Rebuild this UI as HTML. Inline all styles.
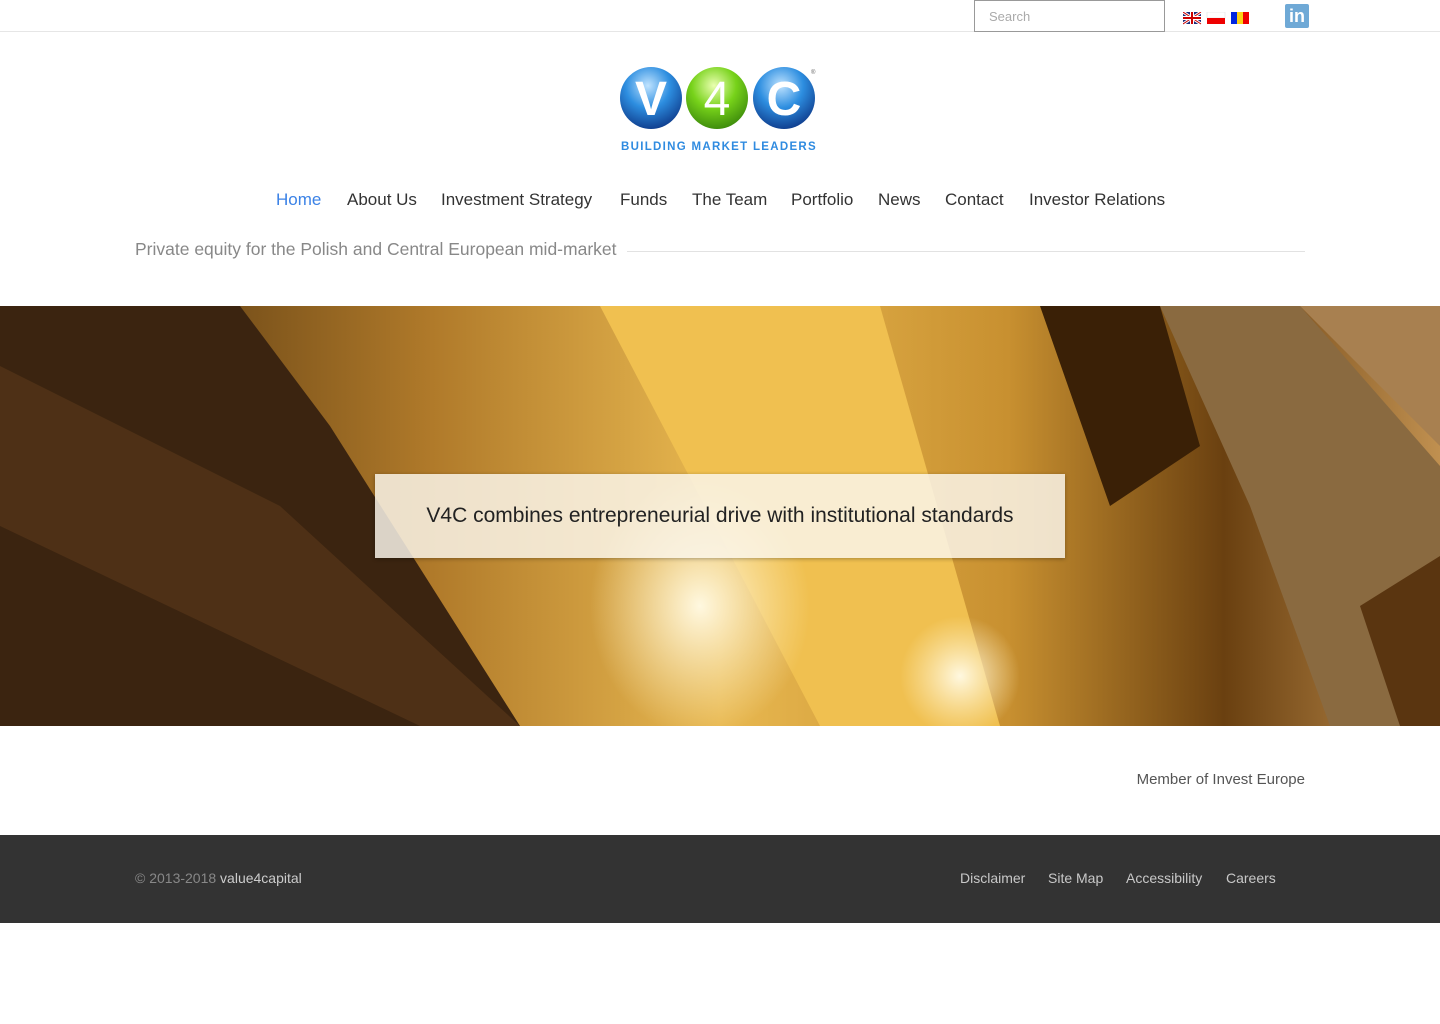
<!DOCTYPE html>
<html><head><meta charset="utf-8">
<style>
*{margin:0;padding:0;box-sizing:border-box}
body{width:1440px;height:1024px;background:#fff;font-family:"Liberation Sans",sans-serif;position:relative;overflow:hidden}
.a{position:absolute;white-space:nowrap}
.nav{top:190px;font-size:17px;color:#333}
.ft{top:870px;font-size:14px;color:#c8c8c8}
</style></head><body>
<div class="a" style="left:0;top:31px;width:1440px;height:1px;background:#e6e6e6"></div>
<div class="a" style="left:974px;top:0;width:191px;height:32px;border:1px solid #999;font-size:13px;color:#aaa;padding:8px 14px">Search</div>
<svg class="a" style="left:1183px;top:12px" width="70" height="13">
<rect x="0" y="0" width="18" height="12" fill="#1a2a7a"/><path d="M0 0L18 12M18 0L0 12" stroke="#fff" stroke-width="3"/><path d="M0 0L18 12M18 0L0 12" stroke="#c00" stroke-width="1"/><path d="M9 0V12M0 6H18" stroke="#fff" stroke-width="4"/><path d="M9 0V12M0 6H18" stroke="#c00" stroke-width="2"/>
<rect x="24" y="0" width="18" height="6" fill="#fff" stroke="#ddd" stroke-width=".5"/><rect x="24" y="6" width="18" height="6" fill="#e00"/>
<rect x="48" y="0" width="6" height="12" fill="#0026e0"/><rect x="54" y="0" width="6" height="12" fill="#fcd116"/><rect x="60" y="0" width="6" height="12" fill="#e00"/>
</svg>
<div class="a" style="left:1285px;top:4px;width:24px;height:24px;background:#6fa9d6;border-radius:2px;color:#fff;font-weight:bold;font-size:18px;line-height:24px;text-align:center">in</div>
<svg class="a" style="left:615px;top:62px" width="205" height="95">
<defs>
<radialGradient id="b" cx=".45" cy=".3" r=".8"><stop offset="0" stop-color="#bfe3ff"/><stop offset=".45" stop-color="#2d8ee0"/><stop offset="1" stop-color="#082a7a"/></radialGradient>
<radialGradient id="g" cx=".45" cy=".3" r=".8"><stop offset="0" stop-color="#eaffb0"/><stop offset=".45" stop-color="#77d21a"/><stop offset="1" stop-color="#2f7a08"/></radialGradient>
</defs>
<circle cx="36" cy="36" r="31" fill="url(#b)"/><circle cx="102" cy="36" r="31" fill="url(#g)"/><circle cx="169" cy="36" r="31" fill="url(#b)"/>
<text x="36" y="53" font-family="Liberation Sans" font-weight="bold" font-size="48" fill="#fff" text-anchor="middle">V</text>
<text x="102" y="53" font-family="Liberation Sans" font-size="48" fill="#fff" text-anchor="middle">4</text>
<text x="169" y="53" font-family="Liberation Sans" font-weight="bold" font-size="48" fill="#fff" text-anchor="middle">C</text>
<text x="196" y="12" font-size="6" fill="#666">®</text>
<text x="6" y="88" font-family="Liberation Sans" font-weight="bold" font-size="11.5" fill="#2f8be0" letter-spacing="1.3">BUILDING  MARKET  LEADERS</text>
</svg>
<div class="a nav" style="left:276px;color:#3b82e6">Home</div>
<div class="a nav" style="left:347px">About Us</div>
<div class="a nav" style="left:441px">Investment Strategy</div>
<div class="a nav" style="left:620px">Funds</div>
<div class="a nav" style="left:692px">The Team</div>
<div class="a nav" style="left:791px">Portfolio</div>
<div class="a nav" style="left:878px">News</div>
<div class="a nav" style="left:945px">Contact</div>
<div class="a nav" style="left:1029px">Investor Relations</div>
<div class="a" style="left:135px;top:239px;font-size:17.5px;color:#888">Private equity for the Polish and Central European mid-market</div>
<div class="a" style="left:627px;top:251px;width:678px;height:1px;background:#e2e2e2"></div>
<svg class="a" style="left:0;top:306px" width="1440" height="420">
<defs>
<linearGradient id="h" x1="0" x2="1"><stop offset="0" stop-color="#3a2208"/><stop offset=".3" stop-color="#b07a2a"/><stop offset=".5" stop-color="#e8b850"/><stop offset=".7" stop-color="#c89030"/><stop offset=".85" stop-color="#6a4010"/><stop offset="1" stop-color="#c09050"/></linearGradient>
<radialGradient id="w" cx=".5" cy=".5" r=".5"><stop offset="0" stop-color="#fff8e0"/><stop offset="1" stop-color="#fff0c0" stop-opacity="0"/></radialGradient>
</defs>
<rect width="1440" height="420" fill="url(#h)"/>
<polygon points="600,0 880,0 1000,420 820,420" fill="#f0c050"/>
<ellipse cx="700" cy="300" rx="110" ry="130" fill="url(#w)"/>
<ellipse cx="960" cy="370" rx="60" ry="60" fill="url(#w)"/>
<polygon points="0,0 240,0 330,120 520,420 0,420" fill="#3b2410"/>
<polygon points="0,60 280,200 520,420 420,420 0,220" fill="#4e3016"/>
<polygon points="1040,0 1160,0 1200,140 1110,200" fill="#3a2006"/>
<polygon points="1160,0 1300,0 1440,160 1440,420 1330,420 1250,200" fill="#8a6a40"/>
<polygon points="1300,0 1440,0 1440,140" fill="#a88050"/>
<polygon points="1360,300 1440,250 1440,420 1400,420" fill="#5a3510"/>
</svg>
<div class="a" style="left:375px;top:474px;width:690px;height:84px;background:rgba(250,245,235,.84);box-shadow:0 1px 4px rgba(0,0,0,.3);text-align:center;font-size:21px;color:#222;line-height:84px">V4C combines entrepreneurial drive with institutional standards</div>
<div class="a" style="right:135px;top:771px;font-size:15px;color:#555">Member of Invest Europe</div>
<div class="a" style="left:0;top:835px;width:1440px;height:88px;background:#333"></div>
<div class="a ft" style="left:135px;color:#888">© 2013-2018 <span style="color:#ccc">value4capital</span></div>
<div class="a ft" style="left:960px">Disclaimer</div>
<div class="a ft" style="left:1048px">Site Map</div>
<div class="a ft" style="left:1126px">Accessibility</div>
<div class="a ft" style="left:1226px">Careers</div>
</body></html>
